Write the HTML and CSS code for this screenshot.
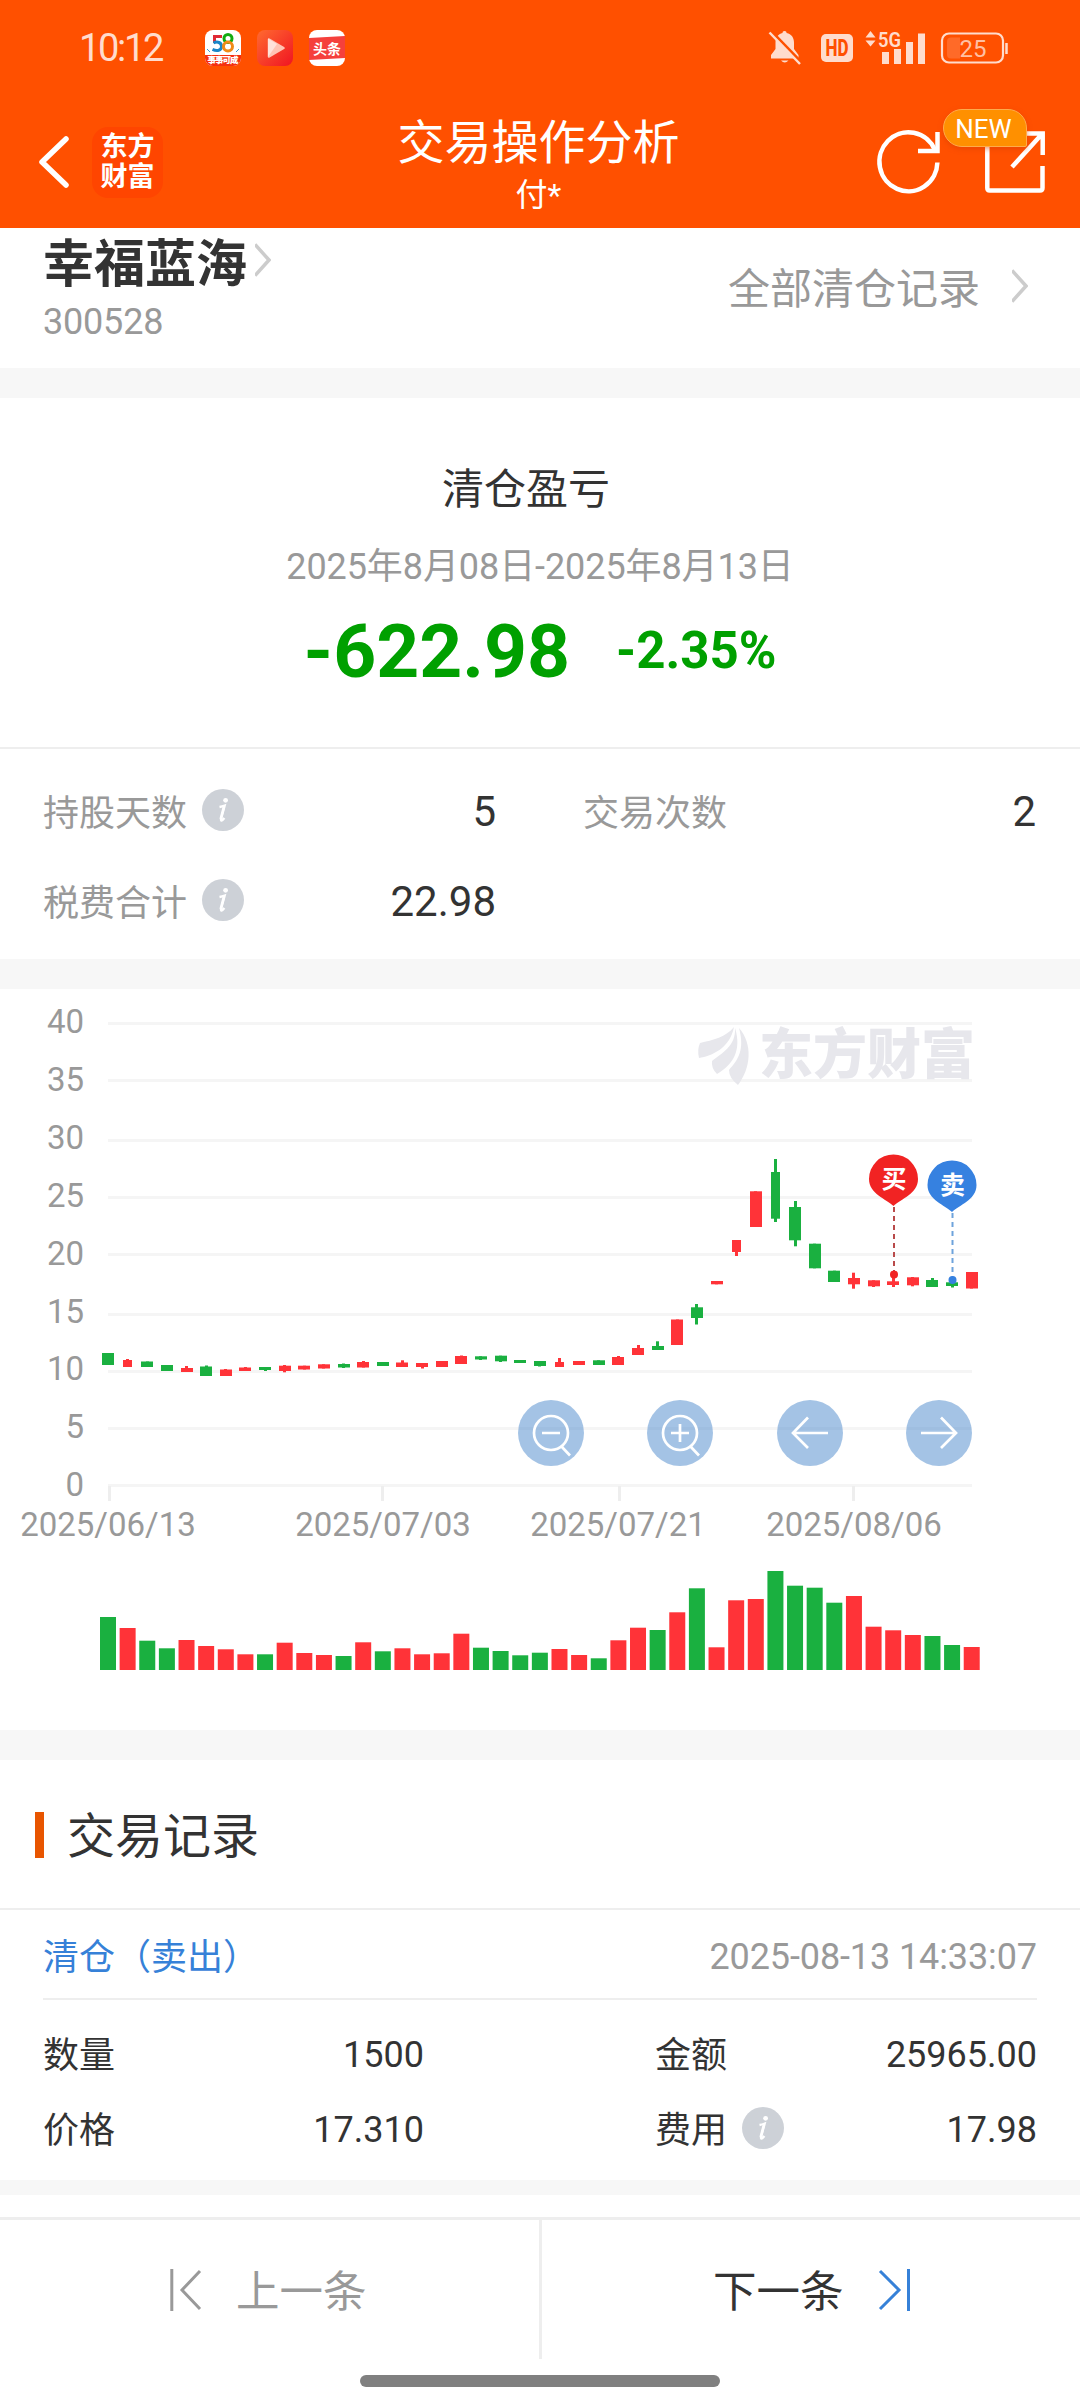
FILE: index.html
```html
<!DOCTYPE html>
<html lang="zh-CN">
<head>
<meta charset="utf-8">
<title>交易操作分析</title>
<link rel="stylesheet" href="styles.css">
</head>
<body>
<svg class="defs" width="0" height="0" aria-hidden="true">
  <symbol id="info" viewBox="0 0 42 42">
    <circle cx="21" cy="21" r="21" fill="#cdd1d7"/>
    <circle cx="23.6" cy="11.3" r="2.4" fill="#fff"/>
    <path d="M17.500 18c2.200-.4 3.800-.9 5.200-1.400l-3.600 13.200c-.5 2.400.8 2.400 3.300-.8" fill="none" stroke="#fff" stroke-width="2.300"/>
    <path d="M22 17.500l-3.300 12.500" stroke="#fff" stroke-width="2.600"/>
  </symbol>
  <symbol id="chevron" viewBox="0 0 16 34">
    <path d="M0 1.500L14 17L0 32.500" fill="none" stroke="#ccc" stroke-width="3.500"/>
  </symbol>
</svg>
<div class="page">
  <header class="header">
    <div class="status">
      <span class="time">10:12</span>
      <div class="apps">
        <svg width="36" height="36" viewBox="0 0 36 36">
          <clipPath id="r"><rect width="36" height="36" rx="8"/></clipPath>
          <g clip-path="url(#r)">
            <rect width="36" height="36" fill="#fff"/>
            <rect y="25" width="36" height="11" fill="#f5300f"/>
            <path d="M17 6.500H9.500V13" fill="none" stroke="#e02a35" stroke-width="3"/>
            <path d="M8.500 13c4-2 8-.5 8 3.500s-4.500 5-9 2.800" fill="none" stroke="#1b86c8" stroke-width="3"/>
            <circle cx="23" cy="8.500" r="4" fill="none" stroke="#12ab12" stroke-width="3"/>
            <circle cx="23" cy="16.500" r="4.500" fill="none" stroke="#f08a18" stroke-width="3"/>
            <path d="M2 19l3 3M34 19l-3 3" stroke="#3a9ad0"/>
            <text x="18" y="33.300" class="app-58" textLength="31">事事可成</text>
          </g>
        </svg>
        <svg width="36" height="36" viewBox="0 0 36 36">
          <linearGradient id="pg" x1="0" y1="0" x2="1" y2="1"><stop offset="0" stop-color="#ff6a30"/><stop offset="1" stop-color="#f01422"/></linearGradient>
          <rect width="36" height="36" rx="8" fill="url(#pg)"/>
          <path d="M12 9.500L26.500 18L12 26.500z" fill="#ffc4b4" stroke="#ffc4b4" stroke-width="2.500" stroke-linejoin="round"/>
          <path d="M11 8.500L20 14L11 27z" fill="#ffe2da"/>
        </svg>
        <svg width="36" height="36" viewBox="0 0 36 36">
          <rect width="36" height="36" rx="8" fill="#fff"/>
          <path d="M0 8L36 6V28L0 30z" fill="#f5403c"/>
          <text x="18" y="23.500" class="app-tt">头条</text>
        </svg>
      </div>
      <div class="signals">
        <svg class="bell" width="32" height="34" viewBox="0 0 32 34">
          <path d="M15.500 0c1.500 0 2 .8 2.100 1.900C22.500 3 25 6.500 25 11.500V18l4.500 6v3.500H2V24l4.500-6v-6.500C6.500 6.500 9 3 13.500 1.900 13.600.8 14 0 15.500 0z" fill="#ffdccd"/>
          <path d="M12 29.500h7.500q-3.700 4-7.500 0z" fill="#ffdccd"/>
          <path d="M2 0L33 32" stroke="#ff5000" stroke-width="3"/>
          <path d="M.5 1.500L31 33" stroke="#ffdccd" stroke-width="2.500"/>
        </svg>
        <svg class="hd" width="32" height="28" viewBox="0 0 32 28">
          <rect width="32" height="28" rx="5" fill="#ffdccd"/>
          <text x="16" y="22" class="hd-text" textLength="23" lengthAdjust="spacingAndGlyphs">HD</text>
        </svg>
        <svg class="sig" width="61" height="34" viewBox="0 0 61 34">
          <path d="M5.500 0l5 6.500h-10zM5.500 15.500l5-6h-10z" fill="#ffdccd"/>
          <text x="13" y="15.500" class="g5" textLength="23" lengthAdjust="spacingAndGlyphs">5G</text>
          <path d="M17 21h7v12h-7zM29 18h7v15h-7zM41 11h7v22h-7zM53 2.500h7V33h-7z" fill="#ffdccd"/>
        </svg>
        <svg class="batt" width="67" height="32" viewBox="0 0 67 32">
          <rect x="1" y="1.500" width="61" height="29" rx="7" fill="none" stroke="#ffdccd" stroke-width="2.200"/>
          <path d="M10 5.500h9v21h-9a4 4 0 0 1-4-4v-13a4 4 0 0 1 4-4z" fill="#ff6a28"/>
          <path d="M65.500 11v11" stroke="#ffdccd" stroke-width="2.500"/>
          <text x="32" y="24.500" class="batt-text">25</text>
        </svg>
      </div>
    </div>
    <nav class="nav">
      <div class="nav-left">
        <svg width="30" height="52" viewBox="0 0 30 52"><path d="M27 3L3 26L27 49" fill="none" stroke="#fff" stroke-width="5.500" stroke-linecap="round" stroke-linejoin="round"/></svg>
        <div class="brand"><span>东方</span><span>财富</span></div>
      </div>
      <div class="titles">
        <h1>交易操作分析</h1>
        <p>付*</p>
      </div>
      <div class="nav-right">
        <svg width="62" height="64" viewBox="0 0 62 64">
          <path d="M59.400 32.500A29 29.500 0 1 1 57 20" fill="none" stroke="#fff" stroke-width="4.500"/>
          <path d="M59.500 2V21H40" fill="none" stroke="#fff" stroke-width="4.500"/>
        </svg>
        <div class="share">
          <svg width="60" height="62" viewBox="0 0 60 62">
            <path d="M30 2.500H2.300V57q0 2.500 2.500 2.500H55q2.500 0 2.500-2.500V35" fill="none" stroke="#fff" stroke-width="4.500"/>
            <path d="M36 2.500H57.700V24M57 3L27 36" fill="none" stroke="#fff" stroke-width="4.500"/>
          </svg>
          <span class="badge">NEW</span>
        </div>
      </div>
    </nav>
  </header>

  <section class="stock">
    <div>
      <div class="stock-name">幸福蓝海<svg width="16" height="34"><use href="#chevron"/></svg></div>
      <div class="stock-code">300528</div>
    </div>
    <div class="all-records">全部清仓记录<svg width="16" height="34"><use href="#chevron"/></svg></div>
  </section>

  <section class="pnl">
    <h2>清仓盈亏</h2>
    <p class="range">2025年8月08日-2025年8月13日</p>
    <div class="amounts"><span class="amount">-622.98</span><span class="percent">-2.35%</span></div>
  </section>

  <section class="stats">
    <div class="stat"><span>持股天数</span><svg class="info"><use href="#info"/></svg><b>5</b></div>
    <div class="stat"><span>交易次数</span><b>2</b></div>
    <div class="stat"><span>税费合计</span><svg class="info"><use href="#info"/></svg><b>22.98</b></div>
  </section>

  <section class="chart">
    <svg id="plot" width="1080" height="741" viewBox="0 989 1080 741"></svg>
    <div class="controls">
      <svg viewBox="0 0 66 66"><circle cx="33" cy="33" r="33"/><path d="M50 33a17 17 0 1 0-34 0a17 17 0 1 0 34 0M43.500 46.500l8.500 9M24 33h18"/></svg>
      <svg viewBox="0 0 66 66"><circle cx="33" cy="33" r="33"/><path d="M50 33a17 17 0 1 0-34 0a17 17 0 1 0 34 0M43.500 46.500l8.500 9M24 33h18M33 24v18"/></svg>
      <svg viewBox="0 0 66 66"><circle cx="33" cy="33" r="33"/><path d="M51 33H16.500M31 17.500L16 33L31 48"/></svg>
      <svg viewBox="0 0 66 66"><circle cx="33" cy="33" r="33"/><path d="M15 33h34.500M35 17.500L50 33L35 48"/></svg>
    </div>
  </section>

  <section class="records">
    <h3>交易记录</h3>
    <article class="record">
      <div class="record-head"><span>清仓（卖出）</span><time>2025-08-13 14:33:07</time></div>
      <div class="record-body">
        <div class="cell"><span>数量</span><b>1500</b></div>
        <div class="cell"><span>金额</span><b>25965.00</b></div>
        <div class="cell"><span>价格</span><b>17.310</b></div>
        <div class="cell"><span>费用</span><svg class="info"><use href="#info"/></svg><b>17.98</b></div>
      </div>
    </article>
  </section>

  <footer class="pager">
    <div class="prev">
      <svg width="31" height="44" viewBox="0 0 31 44"><path d="M1.800 1v42M30 3L12 22L30 41" fill="none" stroke="#999" stroke-width="3"/></svg>
      <span>上一条</span>
    </div>
    <div class="next">
      <span>下一条</span>
      <svg width="31" height="44" viewBox="0 0 31 44"><path d="M29.500 1v42M1 3L20 22L1 41" fill="none" stroke="#3681d8" stroke-width="3"/></svg>
    </div>
  </footer>
  <div class="home"></div>
</div>
<script src="chart.js"></script>
</body>
</html>
```
FILE: styles.css
```css
* { box-sizing: border-box; margin: 0; padding: 0; }
body { width: 1080px; background: #fff; color: #333; font-family: Roboto, "Noto Sans CJK SC", sans-serif; font-size: 36px; }
svg { display: block; flex: none; overflow: visible; }
.defs { position: absolute; }
.page { width: 1080px; height: 2408px; display: flex; flex-direction: column; overflow: hidden; }

.header { height: 228px; background: #ff5000; color: #fff; }
.status { height: 96px; display: flex; align-items: center; padding: 0 72px 0 79px; }
.time { width: 126px; font-size: 38px; letter-spacing: -2.300px; color: #ffdccd; }
.apps { display: flex; gap: 16px; }
.app-58 { font-size: 8.500px; font-weight: 900; fill: #fff; text-anchor: middle; }
.app-tt { font-size: 14px; font-weight: 700; fill: #fff; text-anchor: middle; }
.signals { display: flex; align-items: center; margin-left: auto; }
.hd { margin-left: 20px; }
.sig { margin-left: 12px; }
.batt { margin-left: 15px; }
.hd-text { font-size: 23px; font-weight: 800; fill: #ff5000; text-anchor: middle; }
.g5 { font-size: 21px; font-weight: 600; fill: #ffdccd; }
.batt-text { font-size: 24px; fill: #ffc0a4; text-anchor: middle; }

.nav { height: 132px; display: grid; grid-template-columns: 1fr auto 1fr; align-items: center; padding: 0 35px 0 39px; }
.nav-left { display: flex; align-items: center; gap: 23px; }
.brand { width: 71px; height: 71px; border-radius: 16px; background: #ff4500; display: flex; flex-direction: column; align-items: center; justify-content: center; font-size: 27px; line-height: 30px; font-weight: 700; }
.titles { text-align: center; padding-top: 5px; margin: 0 2px 0 -5px; }
.titles h1 { font-size: 47px; line-height: 56px; font-weight: 400; }
.titles p { font-size: 32px; line-height: 38px; margin-top: 5px; }
.nav-right { display: flex; justify-content: flex-end; align-items: center; gap: 45px; }
.share { position: relative; }
.badge { position: absolute; left: -42px; top: -22px; width: 84px; height: 38px; border: 1px solid #ffab4a; border-radius: 19px 19px 2px 19px; background: #ff9000; box-shadow: 0 2px 5px #d8400080; font-size: 26px; line-height: 38px; text-align: center; padding-right: 3px; }

.stock { height: 170px; border-bottom: 30px solid #f7f7f7; padding: 7px 52px 0 43px; display: flex; justify-content: space-between; }
.stock-name { display: flex; gap: 8px; font-size: 51px; line-height: 60px; font-weight: 700; }
.stock-name svg { margin-top: 8px; }
.stock-code { font-size: 36px; line-height: 44px; margin-top: 5px; color: #999; letter-spacing: -.2px; }
.all-records { display: flex; align-items: center; gap: 32px; height: 101px; font-size: 42px; color: #999; }

.pnl { height: 351px; padding-top: 59px; border-bottom: 2px solid #eee; text-align: center; }
.pnl h2 { font-size: 42px; line-height: 66px; font-weight: 400; padding-right: 28px; }
.range { font-size: 36px; line-height: 44px; margin-top: 22px; color: #999; letter-spacing: -.08px; }
.amounts { display: flex; align-items: center; justify-content: center; gap: 46px; margin-top: 18px; line-height: 88px; color: #00a000; font-weight: 700; }
.amount { font-size: 75px; }
.percent { font-size: 51px; }

.stats { height: 240px; border-bottom: 30px solid #f7f7f7; display: grid; grid-template-columns: 453px 453px; grid-auto-rows: 90px; column-gap: 87px; padding: 16px 44px 0 43px; }
.stat, .cell { display: flex; align-items: center; }
.stat { color: #999; }
.stat span { padding-bottom: 1px; }
.stat b, .cell b { margin-left: auto; font-weight: 400; color: #333; }
.stat b { font-size: 42px; padding-top: 2px; }
.info { width: 42px; height: 42px; margin-left: 15px; }

.chart { position: relative; height: 771px; border-bottom: 30px solid #f7f7f7; }
.controls { position: absolute; left: 518px; top: 411px; width: 454px; display: flex; justify-content: space-between; }
.controls svg { width: 66px; height: 66px; fill: none; stroke: #fff; stroke-width: 2.700; }
.controls circle { fill: #4a87cc; fill-opacity: .5; stroke: none; }
.axis { font-size: 33px; fill: #999; }
.y { text-anchor: end; }
.x { text-anchor: middle; }
.grid { fill: #f5f5f5; }
.tick { fill: #eee; }
.up { fill: #ff3338; }
.down { fill: #1ab040; }
.mark { fill: #fff; font-size: 25px; font-weight: 700; text-anchor: middle; }
.logo { fill: #e7e7ec; }
.logo-text { font-size: 54px; font-weight: 900; }

.records { height: 435px; border-bottom: 15px solid #f7f7f7; }
.records h3 { height: 150px; border-bottom: 2px solid #eee; padding: 6px 0 0 35px; display: flex; align-items: center; gap: 23px; font-size: 48px; font-weight: 400; line-height: 66px; }
.records h3::before { content: ""; width: 9px; height: 46px; background: #e85500; margin-bottom: 5px; }
.record { padding: 0 43px; }
.record-head { height: 90px; border-bottom: 2px solid #eee; display: flex; align-items: center; justify-content: space-between; color: #3681d8; }
.record-head time { color: #999; padding-top: 5px; letter-spacing: -.1px; }
.record-body { display: grid; grid-template-columns: 381px 382px; grid-auto-rows: 75px; column-gap: 231px; padding-top: 15px; }
.cell span { padding-bottom: 1px; }
.cell b { padding-top: 4px; }

.pager { height: 142px; margin-top: 22px; border-top: 3px solid #eee; display: grid; grid-template-columns: 542px 538px; font-size: 43.500px; }
.prev, .next { display: flex; align-items: center; gap: 35px; }
.prev { padding-left: 170px; color: #999; border-right: 3px solid #eee; }
.next { padding-left: 171px; }
.pager span { padding-bottom: 2px; }
.home { width: 360px; height: 12px; border-radius: 6px; background: #808080; margin: 16px auto 0; }
```
FILE: chart.js
```js
const STEP = 19.63, X0 = 108, VOL_BASE = 1670;
// colour, body top, body bottom, wick top, wick bottom, volume height, volume colour
const days = [
  ['g',1353,1365,1353,1365,53],['r',1360,1367,1359,1367,42],['g',1361.5,1367,1361.5,1367,29.3],
  ['g',1365,1371,1365,1371,21.700],['r',1368,1372,1366,1372,30],['g',1366.5,1376,1365.500,1376,24,'r'],
  ['r',1369.500,1376,1369,1376,20.700],['r',1367.500,1371,1367,1371,15.700],['g',1367,1370,1367,1371,15.700],
  ['r',1365.700,1371,1365,1372.300,27.300],['r',1365.700,1369.500,1365.700,1369.500,17],['r',1364.300,1368.500,1364.300,1368.500,15],
  ['g',1364,1367.500,1363.500,1368,14],['r',1362,1367.500,1361,1367.500,27.700],['g',1362,1366,1362,1366,18.700],
  ['r',1362.500,1367,1360.300,1367,21.700],['r',1363,1367,1363,1368.500,15.700],['r',1361,1367,1361,1367,16.700],
  ['r',1356,1364,1355.500,1364,36.300],['g',1356.300,1359.500,1356.300,1360,22.300],['g',1355.700,1361.300,1355.700,1362,19],
  ['g',1360,1363,1360,1363,14.700],['g',1361,1366,1361,1366.500,17.300],['r',1362,1367,1358,1367,21],
  ['r',1361,1365,1361,1365,15],['g',1360.300,1365,1360.300,1365,11.700],['r',1357,1365,1356,1365,29.700],
  ['r',1348,1355,1345,1355,42.300],['g',1346,1350,1341.300,1350,40],['r',1319.500,1345,1319.500,1345,57.700],
  ['g',1307.300,1318,1304,1324.500,81.700],['r',1281,1284.300,1281,1284.300,22.700],['r',1240,1252,1240,1256,69.700],
  ['r',1191.300,1227,1191.300,1227,71],['g',1172,1218.700,1159,1222,99],['g',1207,1240.300,1201,1246.300,84.300],
  ['g',1243.700,1268.300,1243.700,1268.300,82.300],['g',1270.700,1282,1270.700,1282,67.300],['r',1278,1284.300,1272.700,1288.700,74],
  ['r',1280.300,1286.300,1280.300,1287,43.300],['r',1281.300,1285,1277,1287,39.700],['r',1277.300,1285.300,1277,1286.300,35],
  ['g',1280,1287,1278,1287,34],['g',1282.300,1286,1281,1287.500,25],['r',1272,1288.500,1272,1288.500,23]
];
const cls = c => c === 'r' ? 'up' : 'down';
const rect = (c, x, y, w, h) => `<rect class="${c}" x="${x}" y="${y}" width="${w}" height="${h}"/>`;
let out = '';

[1022, 1079, 1139, 1196, 1253, 1313, 1370, 1427, 1484].forEach((y, i) => {
  out += rect('grid', 108, y, 864, 3);
  out += `<text class="axis y" x="84" y="${1033 + i * 57.9}">${40 - i * 5}</text>`;
});
[[108, 108, '2025/06/13'], [381, 383, '2025/07/03'], [618, 618, '2025/07/21'], [852, 854, '2025/08/06']].forEach(([t, x, s]) => {
  out += rect('tick', t, 1486, 3, 15) + `<text class="axis x" x="${x}" y="1536">${s}</text>`;
});

// Brand watermark
out += `<g class="logo">
  <path d="M734 1027C726 1037 713 1040 700 1043Q697 1050 699 1058C712 1056 730 1048 734 1027z"/>
  <path d="M735 1028C736 1046 722 1053 712 1061Q711 1068 717 1074C733 1065 742 1050 735 1028z"/>
  <path d="M739 1028C745 1050 738 1060 729 1070Q729 1078 738 1085C751 1068 753 1044 739 1028z"/>
  <text class="logo-text" x="759" y="1074" textLength="216">东方财富</text></g>`;

days.forEach(([c, top, bottom, high, low, vol, vc], i) => {
  const x = X0 + i * STEP, w = [1, 23, 32, 34].includes(i) ? 9 : 12;
  out += rect(cls(c), Math.round(x - w / 2), top, w, bottom - top);
  out += rect(cls(c), Math.round(x - 1.5), high, 3, low - high);
  out += rect(cls(vc || c), x - 8, VOL_BASE - vol, 16, vol);
});

// Buy and sell pins
[['买', 893.5, 1179, '#f12323', '#b94a4a', 1274.500], ['卖', 952, 1185, '#3681e0', '#6ea3dc', 1280]].forEach(([s, x, y, f, line, dot]) => {
  out += `<path d="M${x + .5} ${y + 28}V${dot}" stroke="${line}" stroke-width="2" stroke-dasharray="5 4"/>
    <circle cx="${x + .5}" cy="${dot}" r="4" fill="${f}"/>
    <path d="M${x} ${y + 27}C${x - 7} ${y + 20} ${x - 24.5} ${y + 15} ${x - 24.5} ${y}a24.5 24.5 0 0 1 49 0C${x + 24.5} ${y + 15} ${x + 7} ${y + 20} ${x} ${y + 27}z" fill="${f}"/>
    <text class="mark" x="${x + .5}" y="${y + 9}">${s}</text>`;
});
document.getElementById('plot').innerHTML = out;
```
